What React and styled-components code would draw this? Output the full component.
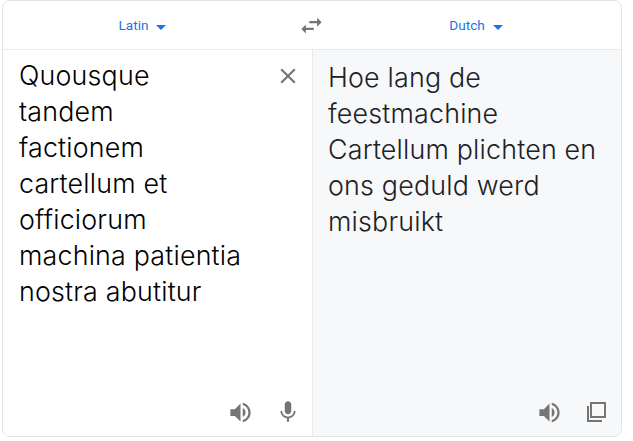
import React from "react";
import styled, { createGlobalStyle } from "styled-components";

const GlobalStyle = createGlobalStyle`
  html, body {
    margin: 0;
    background: #fff;
  }
`;

const Page = styled.div`
  width: 633px;
  height: 441px;
  padding: 0 11px 4px 2px;
  box-sizing: border-box;
`;

const Card = styled.div`
  height: 100%;
  box-sizing: border-box;
  border: 1px solid #e2e4e7;
  border-radius: 8px;
  background: #fff;
  overflow: hidden;
  display: flex;
  flex-direction: column;
`;

const Toolbar = styled.div`
  height: 49px;
  box-sizing: border-box;
  flex: none;
  display: grid;
  grid-template-columns: 279px 59px 270px;
  align-items: center;
  border-bottom: 1px solid #e8eaed;
`;

const LangButton = styled.div`
  display: flex;
  align-items: center;
  justify-content: center;
  gap: 8px;
  font: 13.6px "Roboto", "Liberation Sans", sans-serif;
  color: #1a73e8;
`;

const Caret = styled.span`
  width: 0;
  height: 0;
  margin-top: 4px;
  border-left: 5px solid transparent;
  border-right: 5px solid transparent;
  border-top: 5px solid #1a73e8;
`;

const SwapIcon = styled.svg`
  width: 27px;
  height: 27px;
  justify-self: center;
  fill: #757575;
`;

const Panels = styled.div`
  flex: 1;
  display: grid;
  grid-template-columns: 309px 1fr;
  min-height: 0;
`;

const Panel = styled.div`
  display: flex;
  flex-direction: column;
  justify-content: space-between;
  background: ${(p) => (p.$result ? "#f7f8fa" : "#fff")};
  border-left: ${(p) => (p.$result ? "1px solid #e8eaed" : "none")};
  min-width: 0;
`;

const TopRow = styled.div`
  display: flex;
  justify-content: space-between;
  align-items: flex-start;
  padding: ${(p) => (p.$result ? "9px 0 0 15px" : "7px 11px 0 16px")};
`;

const Line = styled.div`
  font: 350 26.8px/36px "Inter", "Open Sans", sans-serif;
  letter-spacing: 0.2px;
  white-space: nowrap;
  color: ${(p) => (p.$result ? "#202124" : "#000")};
`;

const Actions = styled.div`
  display: flex;
  justify-content: flex-end;
`;

const ActionCell = styled.div`
  width: 48px;
  height: 48px;
  display: flex;
  align-items: center;
  justify-content: center;
`;

const Icon = styled.svg`
  width: ${(p) => p.$size || 24}px;
  height: ${(p) => p.$size || 24}px;
  fill: #757575;
  flex: none;
`;

const ClearIcon = styled(Icon)`
  margin-top: 6px;
`;

const Speaker = () => (
  <Icon $size={27} viewBox="0 0 24 24">
    <path d="M3 9v6h4l5 5V4L7 9H3zm13.5 3c0-1.77-1.02-3.29-2.5-4.03v8.05c1.48-.73 2.5-2.25 2.5-4.02zM14 3.23v2.06c2.89.86 5 3.54 5 6.71s-2.11 5.85-5 6.71v2.06c4.01-.91 7-4.49 7-8.77s-2.99-7.86-7-8.77z" />
  </Icon>
);

const Mic = () => (
  <Icon $size={26} viewBox="0 0 24 24">
    <path d="M12 14c1.66 0 2.99-1.34 2.99-3L15 5c0-1.66-1.34-3-3-3S9 3.34 9 5v6c0 1.66 1.34 3 3 3zm5.3-3c0 3-2.54 5.1-5.3 5.1S6.7 14 6.7 11H5c0 3.41 2.72 6.23 6 6.72V21h2v-3.28c3.28-.48 6-3.3 6-6.72h-1.7z" />
  </Icon>
);

const Copy = () => (
  <Icon viewBox="0 0 24 24">
    <path fillRule="evenodd" d="M5 2h16v16H5zM7 4v12h12V4z" />
    <path d="M2 6h2v14h13v2H2z" />
  </Icon>
);

const sourceLines = [
  "Quousque",
  "tandem",
  "factionem",
  "cartellum et",
  "officiorum",
  "machina patientia",
  "nostra abutitur",
];

const resultLines = [
  "Hoe lang de",
  "feestmachine",
  "Cartellum plichten en",
  "ons geduld werd",
  "misbruikt",
];

const App = () => (
  <Page>
    <GlobalStyle />
    <Card>
      <Toolbar>
        <LangButton>
          Latin <Caret />
        </LangButton>
        <SwapIcon viewBox="0 0 24 24">
          <path d="M6.99 11L3 15l3.99 4v-3H14v-2H6.99v-3zM21 9l-3.99-4v3H10v2h7.01v3L21 9z" />
        </SwapIcon>
        <LangButton>
          Dutch <Caret />
        </LangButton>
      </Toolbar>
      <Panels>
        <Panel>
          <TopRow>
            <div>
              {sourceLines.map((line) => (
                <Line key={line}>{line}</Line>
              ))}
            </div>
            <ClearIcon $size={26} viewBox="0 0 24 24">
              <path d="M19 6.41L17.59 5 12 10.59 6.41 5 5 6.41 10.59 12 5 17.59 6.41 19 12 13.41 17.59 19 19 17.59 13.41 12z" />
            </ClearIcon>
          </TopRow>
          <Actions>
            <ActionCell>
              <Speaker />
            </ActionCell>
            <ActionCell>
              <Mic />
            </ActionCell>
          </Actions>
        </Panel>
        <Panel $result>
          <TopRow $result>
            <div>
              {resultLines.map((line) => (
                <Line $result key={line}>
                  {line}
                </Line>
              ))}
            </div>
          </TopRow>
          <Actions>
            <ActionCell>
              <Speaker />
            </ActionCell>
            <ActionCell>
              <Copy />
            </ActionCell>
          </Actions>
        </Panel>
      </Panels>
    </Card>
  </Page>
);

export default App;
